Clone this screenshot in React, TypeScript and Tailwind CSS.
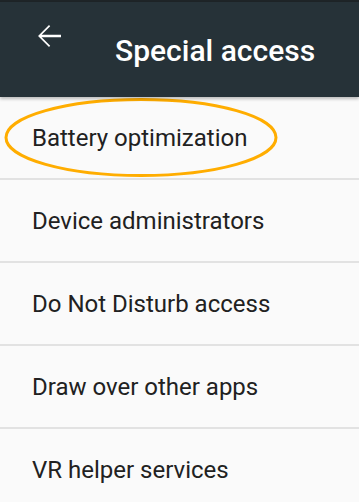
import React from "react";

const items = [
  "Battery optimization",
  "Device administrators",
  "Do Not Disturb access",
  "Draw over other apps",
  "VR helper services",
];

export default function App() {
  return (
    <div
      className="w-[359px] h-[502px] overflow-hidden bg-[#fafafa] relative"
      style={{ fontFamily: "Roboto, 'Noto Sans', sans-serif" }}
    >
      <div className="h-[2px] bg-[#1e2427]" />
      <header className="h-[95px] bg-[#263238] flex items-start relative z-10 shadow-[0_2px_3px_rgba(0,0,0,0.25)]">
        <div className="w-[115px] pl-[37px] pt-[22px]">
          <svg width="24" height="24" viewBox="4 4 16 16" className="block">
            <path
              d="M20 11.1H7.1l5.7-5.6L12 4.7 4.7 12l7.3 7.3.8-.8-5.7-5.6H20z"
              fill="#ffffff"
            />
          </svg>
        </div>
        <h1 className="text-white text-[30px] font-medium leading-none pt-[34px]">
          Special access
        </h1>
      </header>
      <div className="relative">
        {items.map((t) => (
          <div
            key={t}
            className="h-[83px] border-b-2 border-[#e2e2e2] flex items-center pl-[32px] text-[#212121] text-[24px]"
          >
            {t}
          </div>
        ))}
        <svg
          className="absolute left-0 top-0 pointer-events-none"
          width="359"
          height="90"
          viewBox="0 0 359 90"
        >
          <ellipse
            cx="141"
            cy="40.5"
            rx="135"
            ry="38"
            fill="none"
            stroke="#ffad00"
            strokeWidth="3"
          />
        </svg>
      </div>
    </div>
  );
}
